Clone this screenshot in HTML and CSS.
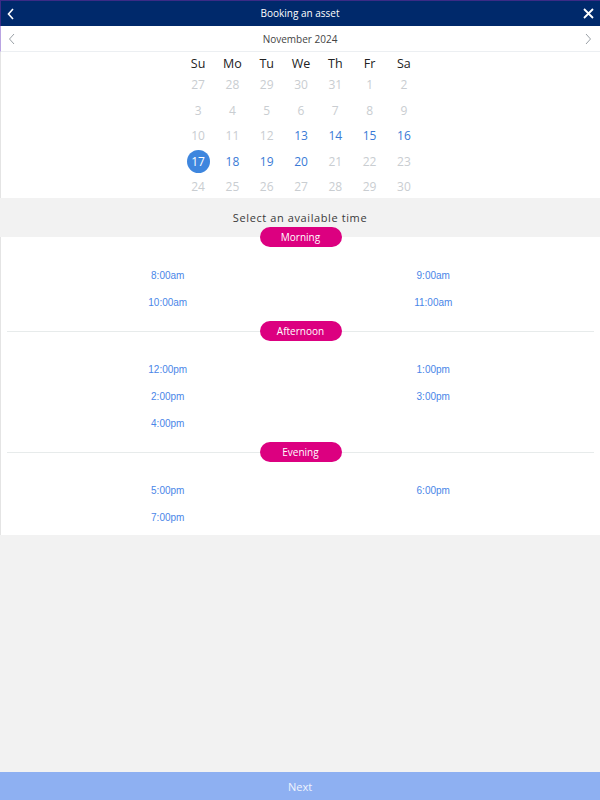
FILE: index.html
```html
<!DOCTYPE html>
<html lang="en">
<head>
  <meta charset="UTF-8">
  <meta name="viewport" content="width=device-width, initial-scale=1.0">
  <title>Booking an asset</title>
  <link rel="stylesheet" href="styles.css">
</head>
<body>
  <div class="app">
    <header class="top-bar">
      <button class="icon-button">
        <svg width="8" height="12" viewBox="0 0 8 12"><path d="M6 1 L1.5 6 L6 11" fill="none" stroke="#fff" stroke-width="1.6"/></svg>
      </button>
      <h1>Booking an asset</h1>
      <button class="icon-button">
        <svg width="11" height="11" viewBox="0 0 11 11"><path d="M1 1 L10 10 M10 1 L1 10" fill="none" stroke="#fff" stroke-width="1.8"/></svg>
      </button>
    </header>

    <div class="month-bar">
      <button class="icon-button">
        <svg width="7" height="12" viewBox="0 0 7 12"><path d="M6 1 L1.5 6 L6 11" fill="none" stroke="#9aa0a6" stroke-width="1"/></svg>
      </button>
      <span>November 2024</span>
      <button class="icon-button">
        <svg width="7" height="12" viewBox="0 0 7 12"><path d="M1 1 L5.5 6 L1 11" fill="none" stroke="#9aa0a6" stroke-width="1"/></svg>
      </button>
    </div>

    <div class="calendar">
      <div class="calendar-grid" id="calendarGrid">
        <span class="day-name">Su</span>
        <span class="day-name">Mo</span>
        <span class="day-name">Tu</span>
        <span class="day-name">We</span>
        <span class="day-name">Th</span>
        <span class="day-name">Fr</span>
        <span class="day-name">Sa</span>

        <span class="day off">27</span><span class="day off">28</span><span class="day off">29</span><span class="day off">30</span><span class="day off">31</span><span class="day off">1</span><span class="day off">2</span>
        <span class="day off">3</span><span class="day off">4</span><span class="day off">5</span><span class="day off">6</span><span class="day off">7</span><span class="day off">8</span><span class="day off">9</span>
        <span class="day off">10</span><span class="day off">11</span><span class="day off">12</span><span class="day">13</span><span class="day">14</span><span class="day">15</span><span class="day">16</span>
        <span class="day selected"><b>17</b></span><span class="day">18</span><span class="day">19</span><span class="day">20</span><span class="day off">21</span><span class="day off">22</span><span class="day off">23</span>
        <span class="day off">24</span><span class="day off">25</span><span class="day off">26</span><span class="day off">27</span><span class="day off">28</span><span class="day off">29</span><span class="day off">30</span>
      </div>
    </div>

    <div class="time-title">Select an available time</div>

    <div class="time-panel">
      <div class="period">
        <div class="period-label"><span>Morning</span></div>
        <div class="time-grid">
          <a class="time-slot">8:00am</a>
          <a class="time-slot">9:00am</a>
          <a class="time-slot">10:00am</a>
          <a class="time-slot">11:00am</a>
        </div>
      </div>

      <div class="period">
        <div class="period-label"><span>Afternoon</span></div>
        <div class="time-grid">
          <a class="time-slot">12:00pm</a>
          <a class="time-slot">1:00pm</a>
          <a class="time-slot">2:00pm</a>
          <a class="time-slot">3:00pm</a>
          <a class="time-slot">4:00pm</a>
        </div>
      </div>

      <div class="period last">
        <div class="period-label"><span>Evening</span></div>
        <div class="time-grid">
          <a class="time-slot">5:00pm</a>
          <a class="time-slot">6:00pm</a>
          <a class="time-slot">7:00pm</a>
        </div>
      </div>
    </div>

    <div class="spacer"></div>

    <button class="next-button">Next</button>
  </div>
</body>
</html>
```

FILE: styles.css
```css
body {
  margin: 0;
  font-family: 'Open Sans', 'Noto Sans', sans-serif;
  background-color: #f2f2f2;
}

.app {
  display: flex;
  flex-direction: column;
  height: 800px;
}

button {
  font-family: inherit;
}

.icon-button {
  background: none;
  border: none;
  padding: 0;
  width: 20px;
  height: 20px;
  display: flex;
  align-items: center;
  justify-content: center;
  cursor: pointer;
}

/* Top bar */
.top-bar {
  height: 25px;
  background-color: #00296b;
  border-top: 1px solid #3b2b86;
  border-left: 1px solid #3b2b86;
  display: flex;
  align-items: center;
  justify-content: space-between;
  padding: 0 1px 0 0;
}

.top-bar h1 {
  margin: 0 0 2px;
  font-size: 10px;
  font-weight: 400;
  color: #fff;
}

/* Month bar */
.month-bar {
  height: 25px;
  background-color: #fff;
  border-left: 1px solid #b9a4e2;
  border-bottom: 1px solid #eceff2;
  display: flex;
  align-items: center;
  justify-content: space-between;
  padding: 0 1px 0 0;
  font-size: 10px;
  color: #444;
}

/* Calendar */
.calendar {
  background-color: #fff;
  border-left: 1px solid #e4e4e4;
  display: flex;
  justify-content: center;
  height: 146px;
}

.calendar-grid {
  display: grid;
  grid-template-columns: repeat(7, 34.3px);
  grid-template-rows: 20px repeat(5, 25.5px);
  margin-left: 1px;
}

.day-name {
  font-size: 12.5px;
  line-height: 16px;
  padding-top: 4px;
  text-align: center;
  color: #222;
}

.day {
  font-size: 12px;
  display: flex;
  align-items: center;
  justify-content: center;
  color: #3a7ad6;
}

.day.off {
  color: #c9cdd1;
}

.day.selected b {
  width: 23px;
  height: 23px;
  border-radius: 50%;
  background-color: #3e86de;
  color: #fff;
  font-weight: 400;
  display: flex;
  align-items: center;
  justify-content: center;
}

/* Time selection */
.time-title {
  height: 39px;
  box-sizing: border-box;
  padding-top: 12px;
  text-align: center;
  font-size: 11px;
  letter-spacing: 0.6px;
  color: #3a3a3a;
}

.time-panel {
  background-color: #fff;
  border-left: 1px solid #e4e4e4;
  display: flex;
  flex-direction: column;
}

.period-label {
  height: 20px;
  display: flex;
  justify-content: center;
  position: relative;
}

.period:first-child .period-label {
  margin-top: -10px;
}

.period-label::before {
  content: '';
  position: absolute;
  left: 6px;
  right: 6px;
  top: 10px;
  border-top: 1px solid #e7ebeb;
}

.period:first-child .period-label::before {
  display: none;
}

.period-label span {
  position: relative;
  width: 82px;
  height: 20px;
  border-radius: 10px;
  background-color: #dc0080;
  color: #fff;
  font-size: 10px;
  line-height: 20px;
  text-align: center;
}

.time-grid {
  display: grid;
  grid-template-columns: 1fr 1fr;
  grid-auto-rows: 27px;
  padding: 14.5px 34px 5.5px;
}

.period.last .time-grid {
  padding-bottom: 4.5px;
}

.time-slot {
  font-family: 'Liberation Sans', Arial, sans-serif;
  font-size: 10px;
  color: #4a86e8;
  display: flex;
  align-items: center;
  justify-content: center;
  cursor: pointer;
}

.spacer {
  flex: 1;
}

.next-button {
  height: 28px;
  border: none;
  background-color: #8eb0f2;
  color: #eef3fd;
  font-size: 11px;
  cursor: pointer;
}
```
